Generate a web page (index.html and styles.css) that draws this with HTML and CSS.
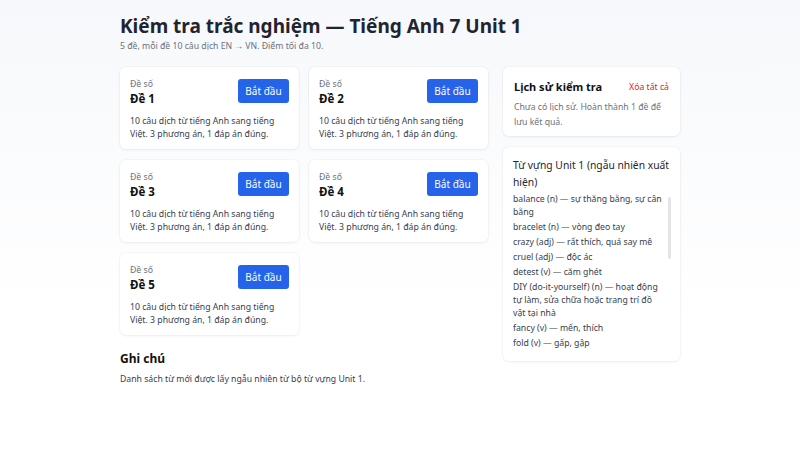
FILE: index.html
```html
<!DOCTYPE html>
<html lang="vi">
<head>
<meta charset="utf-8">
<title>Kiểm tra trắc nghiệm</title>
<link rel="stylesheet" href="styles.css">
</head>
<body>
<div class="wrap">
  <header class="head">
    <h1>Kiểm tra trắc nghiệm — Tiếng Anh 7 Unit 1</h1>
    <p class="sub">5 đề, mỗi đề 10 câu dịch EN → VN. Điểm tối đa 10.</p>
  </header>
  <div class="layout">
    <main class="main">
      <div class="grid">
        <div class="card quiz">
          <div class="quiz-top">
            <div><div class="label">Đề số</div><div class="name">Đề 1</div></div>
            <button class="btn">Bắt đầu</button>
          </div>
          <p class="desc">10 câu dịch từ tiếng Anh sang tiếng Việt. 3 phương án, 1 đáp án đúng.</p>
        </div>
        <div class="card quiz">
          <div class="quiz-top">
            <div><div class="label">Đề số</div><div class="name">Đề 2</div></div>
            <button class="btn">Bắt đầu</button>
          </div>
          <p class="desc">10 câu dịch từ tiếng Anh sang tiếng Việt. 3 phương án, 1 đáp án đúng.</p>
        </div>
        <div class="card quiz">
          <div class="quiz-top">
            <div><div class="label">Đề số</div><div class="name">Đề 3</div></div>
            <button class="btn">Bắt đầu</button>
          </div>
          <p class="desc">10 câu dịch từ tiếng Anh sang tiếng Việt. 3 phương án, 1 đáp án đúng.</p>
        </div>
        <div class="card quiz">
          <div class="quiz-top">
            <div><div class="label">Đề số</div><div class="name">Đề 4</div></div>
            <button class="btn">Bắt đầu</button>
          </div>
          <p class="desc">10 câu dịch từ tiếng Anh sang tiếng Việt. 3 phương án, 1 đáp án đúng.</p>
        </div>
        <div class="card quiz">
          <div class="quiz-top">
            <div><div class="label">Đề số</div><div class="name">Đề 5</div></div>
            <button class="btn">Bắt đầu</button>
          </div>
          <p class="desc">10 câu dịch từ tiếng Anh sang tiếng Việt. 3 phương án, 1 đáp án đúng.</p>
        </div>
      </div>
      <section class="note">
        <h2>Ghi chú</h2>
        <p>Danh sách từ mới được lấy ngẫu nhiên từ bộ từ vựng Unit 1.</p>
      </section>
    </main>
    <aside class="side">
      <div class="card history">
        <div class="hist-head">
          <h3>Lịch sử kiểm tra</h3>
          <a class="clear" href="#">Xóa tất cả</a>
        </div>
        <p class="empty">Chưa có lịch sử. Hoàn thành 1 đề để lưu kết quả.</p>
      </div>
      <div class="card vocab">
        <h3 class="vocab-title">Từ vựng Unit 1 (ngẫu nhiên xuất hiện)</h3>
        <div class="vocab-box">
          <ul class="vocab-list">
            <li>balance (n) — sự thăng bằng, sự cân bằng</li>
            <li>bracelet (n) — vòng đeo tay</li>
            <li>crazy (adj) — rất thích, quá say mê</li>
            <li>cruel (adj) — độc ác</li>
            <li>detest (v) — căm ghét</li>
            <li>DIY (do-it-yourself) (n) — hoạt động tự làm, sửa chữa hoặc trang trí đồ vật tại nhà</li>
            <li>fancy (v) — mến, thích</li>
            <li>fold (v) — gấp, gập</li>
            <li>hobby (n) — sở thích</li>
            <li>kit (n) — bộ dụng cụ</li>
          </ul>
          <span class="scroll-thumb"></span>
        </div>
      </div>
    </aside>
  </div>
</div>
</body>
</html>
```
FILE: styles.css
```css
* { box-sizing: border-box; }
html, body { height: 100%; }
body {
  margin: 0;
  font-family: "Noto Sans", "Open Sans", sans-serif;
  color: #111827;
  background: linear-gradient(180deg, #f6f8fb 0%, #ffffff 70%);
  background-attachment: fixed;
}
.wrap {
  width: 560px;
  margin: 0 auto;
  padding-top: 12px;
}
.head h1 {
  margin: 0;
  font-size: 19px;
  line-height: 28px;
  font-weight: 700;
  color: #1f2430;
}
.sub {
  margin: 0;
  font-size: 8.7px;
  line-height: 12px;
  color: #6b7280;
}
.layout {
  display: grid;
  grid-template-columns: 368px 177px;
  gap: 15px;
  margin-top: 15px;
}
.grid {
  display: grid;
  grid-template-columns: 179px 179px;
  column-gap: 10px;
  row-gap: 11px;
}
.card {
  background: #fff;
  border-radius: 6px;
  box-shadow: 0 1px 3px rgba(15, 23, 42, 0.06), 0 0 0 1px rgba(15, 23, 42, 0.025);
}
.quiz { padding: 11px 10px 9px; height: 82px; }
.quiz-top {
  display: flex;
  justify-content: space-between;
  align-items: flex-start;
}
.label {
  font-size: 8.7px;
  line-height: 13px;
  color: #6b7280;
}
.name {
  font-size: 11.5px;
  line-height: 16px;
  font-weight: 700;
  color: #111;
}
.btn {
  margin-top: 1px;
  height: 24px;
  width: 51px;
  padding: 0;
  border: 0;
  border-radius: 3px;
  background: #2563eb;
  color: #fff;
  font-family: inherit;
  font-size: 10px;
}
.desc {
  margin: 8px 0 0;
  font-size: 8.7px;
  line-height: 13px;
  color: #374151;
}
.note { margin-top: 15px; }
.note h2 {
  margin: 0;
  font-size: 12px;
  line-height: 18px;
  font-weight: 700;
  color: #111;
}
.note p {
  margin: 5px 0 0;
  font-size: 8.7px;
  line-height: 13px;
  color: #374151;
}
.side { display: flex; flex-direction: column; gap: 11px; }
.history { padding: 12px 11px 10px 11px; height: 69px; }
.hist-head {
  display: flex;
  justify-content: space-between;
  align-items: center;
}
.hist-head h3 {
  margin: 0;
  font-size: 11px;
  line-height: 16px;
  font-weight: 700;
  color: #111;
}
.clear {
  font-size: 8.7px;
  color: #dc2626;
  text-decoration: none;
}
.empty {
  margin: 5px 0 0;
  font-size: 8.7px;
  line-height: 15px;
  color: #6b7280;
}
.vocab { padding: 10px 8px 10px 10px; height: 214px; }
.vocab-title {
  margin: 0;
  font-size: 10.3px;
  line-height: 17px;
  font-weight: 400;
  color: #1f2430;
}
.vocab-box {
  position: relative;
  margin-top: 2px;
}
.vocab-list {
  list-style: none;
  margin: 0;
  padding: 0 6px 0 0;
  height: 158px;
  overflow: hidden;
  font-size: 8.7px;
  line-height: 13px;
  color: #374151;
}
.vocab-list li { margin-bottom: 2px; }
.scroll-thumb {
  position: absolute;
  right: 1px;
  top: 4px;
  width: 3px;
  height: 62px;
  border-radius: 2px;
  background: #e3e5e9;
}
```
